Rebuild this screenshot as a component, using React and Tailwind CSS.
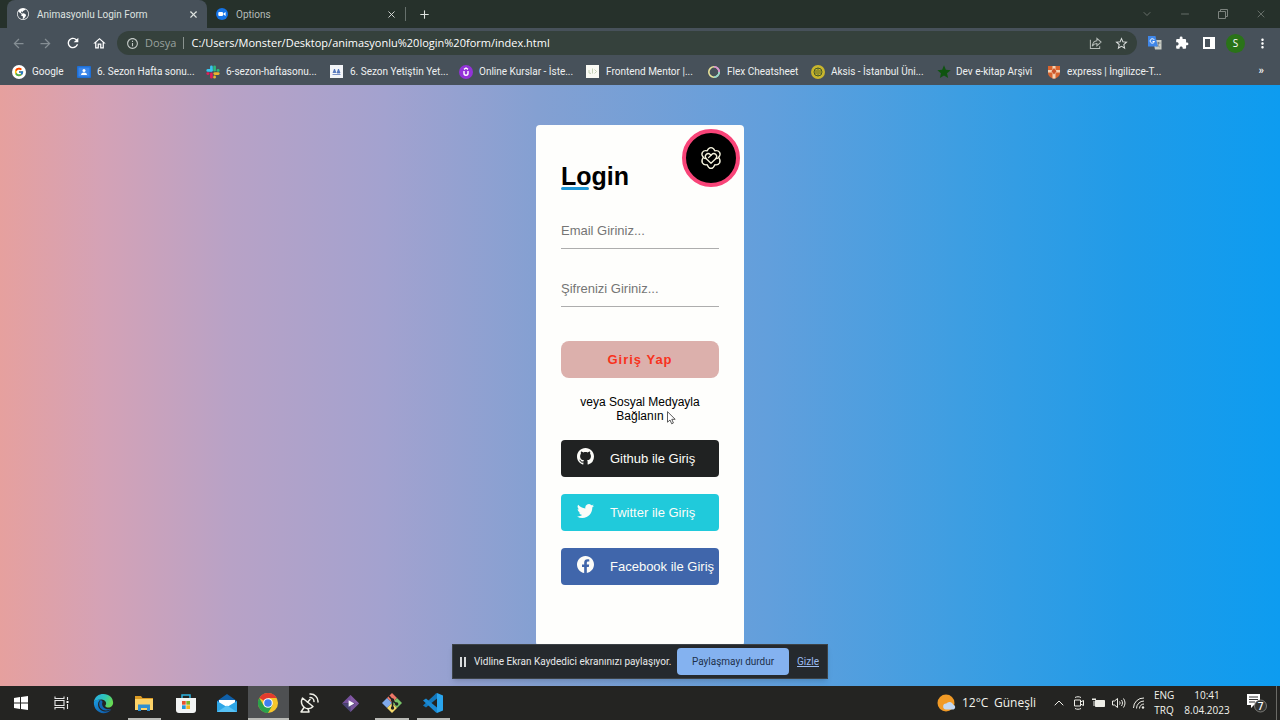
import React from "react";
import { BsGithub, BsTwitter, BsFacebook, BsGlobeAmericas } from "react-icons/bs";
import { FcGoogle } from "react-icons/fc";
import {
  MdArrowBack,
  MdArrowForward,
  MdRefresh,
  MdOutlineHome,
  MdOutlineInfo,
  MdStarOutline,
  MdExtension,
  MdMoreVert,
  MdStar,
} from "react-icons/md";
import { X, Plus, ChevronDown, ChevronUp, Minus } from "lucide-react";

const UI = "font-['Open_Sans','Noto_Sans',sans-serif]";
const UI_COMPACT = "font-[Roboto,'Open_Sans',sans-serif]";
const ARIAL = "font-['Liberation_Sans',Arial,sans-serif]";

/* ---------- bookmark icons ---------- */

const GoogleMark = () => (
  <svg viewBox="0 0 14 14" className="size-3.5">
    <circle cx="7" cy="7" r="7" fill="#fff" />
    <FcGoogle x="2" y="2" size={10} />
  </svg>
);

const ClassroomMark = () => (
  <svg viewBox="0 0 14 14" className="size-3.5">
    <rect y="1" width="14" height="12" rx="1" fill="#1d6fd6" />
    <rect x="1.5" y="2.5" width="11" height="9" fill="#3b86ea" />
    <circle cx="7" cy="5.6" r="1.5" fill="#fff" />
    <path d="M4 10c0-1.700 1.500-2.500 3-2.500s3 .8 3 2.500z" fill="#fff" />
  </svg>
);

const SlackMark = () => (
  <svg viewBox="0 0 24 24" className="size-3.5">
    <g strokeWidth="4.600" strokeLinecap="round">
      <path d="M9.300 3v6" stroke="#36c5f0" />
      <path d="M3 9.300h6" stroke="#36c5f0" />
      <path d="M14.700 3v6" stroke="#2eb67d" />
      <path d="M21 9.300h-.6" stroke="#2eb67d" />
      <path d="M15 14.700h6" stroke="#ecb22e" />
      <path d="M14.700 21v-.6" stroke="#ecb22e" />
      <path d="M9.300 15v6" stroke="#e01e5a" />
      <path d="M3 14.700h.6" stroke="#e01e5a" />
    </g>
  </svg>
);

const PaperMark = () => (
  <svg viewBox="0 0 13 13" className="size-[13px]">
    <rect width="13" height="13" fill="#f3f5f8" />
    <path d="M3 8l1.500-4 1.500 4M7 8l1.500-4L10 8z" fill="#5d7fc4" stroke="#4267b2" strokeWidth=".7" />
    <path d="M2.500 9.500h8" stroke="#7b93c8" />
  </svg>
);

const CourseMark = () => (
  <svg viewBox="0 0 14 14" className="size-3.5">
    <circle cx="7" cy="7" r="7" fill="#9333d8" />
    <path d="M5 6v2.200a2 2 0 0 0 4 0V6M5 4.300L7 3l2 1.300" fill="none" stroke="#fff" strokeWidth="1.400" />
  </svg>
);

const MentorMark = () => (
  <svg viewBox="0 0 13 13" className="size-[13px]">
    <rect width="13" height="13" fill="#fafaf4" />
    <path d="M3 5v3l2 .5M6.500 3.500v5M8.500 4.500l2 2-2 2" fill="none" stroke="#b9c8a6" strokeWidth=".8" />
  </svg>
);

const RingMark = () => (
  <svg viewBox="0 0 14 14" className="size-3.5" fill="none" strokeWidth="1.600">
    <circle cx="7" cy="7" r="5.200" stroke="#e8e39a" />
    <path d="M7 1.800A5.200 5.200 0 0 1 12.200 7" stroke="#d98ad8" />
    <path d="M12.200 7A5.200 5.200 0 0 1 7 12.200" stroke="#8fd6d0" />
  </svg>
);

const AksisMark = () => (
  <svg viewBox="0 0 14 14" className="size-3.5" fill="none">
    <circle cx="7" cy="7" r="7" fill="#c9b62c" />
    <circle cx="7" cy="7" r="4" stroke="#44592a" />
    <path d="M7 3v8M5 5v4M9 5v4" stroke="#44592a" strokeWidth=".8" />
  </svg>
);

const ShieldMark = () => (
  <svg viewBox="0 0 14 14" className="size-3.5">
    <path d="M1 1h12v7c0 3-3 5-6 6-3-1-6-3-6-6z" fill="#d9642e" />
    <path d="M5.500 1h3v12.500h-3zM1 5h12v2.500H1z" fill="#f3d3b4" />
    <path d="M7 3l2.500 3.300L7 9.500 4.500 6.300z" fill="#c9542a" />
  </svg>
);

const BOOKMARKS = [
  { icon: <GoogleMark />, label: "Google", width: "w-[65px]" },
  { icon: <ClassroomMark />, label: "6. Sezon Hafta sonu...", width: "w-[129px]" },
  { icon: <SlackMark />, label: "6-sezon-haftasonu...", width: "w-[124px]" },
  { icon: <PaperMark />, label: "6. Sezon Yetiştin Yet...", width: "w-[129px]" },
  { icon: <CourseMark />, label: "Online Kurslar - İste...", width: "w-[127px]" },
  { icon: <MentorMark />, label: "Frontend Mentor |...", width: "w-[121px]" },
  { icon: <RingMark />, label: "Flex Cheatsheet", width: "w-[104px]" },
  { icon: <AksisMark />, label: "Aksis - İstanbul Üni...", width: "w-[125px]" },
  { icon: <MdStar size={16} className="text-[#0f5410]" />, label: "Dev e-kitap Arşivi", width: "w-[111px]" },
  { icon: <ShieldMark />, label: "express | İngilizce-T...", width: "w-[125px]" },
];

/* ---------- browser chrome ---------- */

function TabStrip() {
  return (
    <div className={`flex h-7 items-stretch bg-[#26312b] pl-[7px] text-[#dfe3e0] ${UI_COMPACT}`}>
      <div className="flex w-[200px] items-center rounded-t-lg bg-[#47515a] pl-[10px] pr-2">
        <BsGlobeAmericas size={12} className="text-white" />
        <span className="ml-2 flex-1 whitespace-nowrap">Animasyonlu Login Form</span>
        <button aria-label="Sekmeyi kapat"><X size={11} strokeWidth={2.5} /></button>
      </div>
      <div className="flex w-[198px] items-center pl-[9px] pr-2">
        <svg viewBox="0 0 12 12" className="size-3">
          <circle cx="6" cy="6" r="6" fill="#1473e6" />
          <rect x="2.300" y="4" width="4.700" height="4" rx="1" fill="#fff" />
          <path d="M7.400 5.500l2.200-1.400v3.800L7.400 6.500z" fill="#fff" />
        </svg>
        <span className="ml-2 flex-1 text-[#b5bcb8]">Options</span>
        <button aria-label="Sekmeyi kapat"><X size={11} strokeWidth={2} /></button>
      </div>
      <div className="my-[7px] w-px bg-[#66706c]" />
      <button aria-label="Yeni sekme" className="ml-3"><Plus size={13} strokeWidth={2} /></button>
      <div className="ml-auto flex items-center text-[#7c837e]">
        <button aria-label="Sekme ara" className="flex w-[38px] justify-center"><ChevronDown size={12} strokeWidth={1.5} /></button>
        <button aria-label="Küçült" className="flex w-[38px] justify-center"><Minus size={12} strokeWidth={1.5} /></button>
        <button aria-label="Geri yükle" className="flex w-[38px] justify-center">
          <svg viewBox="0 0 10 10" className="size-2.5" fill="none" stroke="currentColor">
            <path d="M.5 2.500h7v7h-7zM2.500 2.500v-2h7v7h-2" />
          </svg>
        </button>
        <button aria-label="Kapat" className="flex w-[38px] justify-center"><X size={12} strokeWidth={1.5} /></button>
      </div>
    </div>
  );
}

function NavButton({ label, children }) {
  return (
    <button aria-label={label} className="flex w-[27px] shrink-0 items-center justify-center">
      {children}
    </button>
  );
}

function Toolbar() {
  return (
    <div className="flex h-[30px] items-center bg-[#47515a] pl-[5px] pr-1 text-white">
      <NavButton label="Geri"><MdArrowBack size={15} className="text-[#858e94]" /></NavButton>
      <NavButton label="İleri"><MdArrowForward size={15} className="text-[#858e94]" /></NavButton>
      <NavButton label="Yenile"><MdRefresh size={16} /></NavButton>
      <NavButton label="Ana sayfa"><MdOutlineHome size={15} /></NavButton>
      <div className="mx-1 flex h-6 flex-1 items-center rounded-full bg-[#35413c] pl-[9px] pr-[3px]">
        <MdOutlineInfo size={13} className="text-[#c3c9c6]" />
        <span className="ml-[6px] text-[11px] text-[#9aa29e]">Dosya</span>
        <div className="mx-[7px] h-3 w-px bg-[#8a938f]" />
        <input
          aria-label="Adres"
          readOnly
          value="C:/Users/Monster/Desktop/animasyonlu%20login%20form/index.html"
          className="min-w-0 flex-1 bg-transparent text-[11px] text-white outline-none"
        />
        <button aria-label="Paylaş" className="flex w-[26px] justify-center text-[#b4bbb7]">
          <svg viewBox="0 0 14 14" className="size-[13px]" fill="none" stroke="currentColor" strokeWidth="1.100">
            <path d="M1.500 3v9.500h10V10" />
            <path d="M8.500 1.500L13 5.500l-4.500 4V7C6 7 4.700 8 3.500 9.800 4 6.500 5.500 4.200 8.500 4z" />
          </svg>
        </button>
        <button aria-label="Yer işareti ekle" className="flex w-[26px] justify-center text-[#dde1df]">
          <MdStarOutline size={15} />
        </button>
      </div>
      <NavButton label="Çeviri">
        <svg viewBox="0 0 14 14" className="size-3.5">
          <path d="M5 4h8.500v9.500H7z" fill="#c9ccc4" />
          <path d="M8.500 7h4M10.500 6v1c0 2-1 3-2 4m.5-2.500c1 1.500 1.800 2 2.700 2.500" stroke="#6b737a" fill="none" strokeWidth=".8" />
          <path d="M0 0h7.500l2.300 10.500H0z" fill="#3f86e8" />
          <path d="M6.300 3.900A2.200 2.200 0 1 0 6.500 5.500H4.600" fill="none" stroke="#fff" />
        </svg>
      </NavButton>
      <NavButton label="Uzantılar"><MdExtension size={14} /></NavButton>
      <NavButton label="Yan panel">
        <svg viewBox="0 0 12 12" className="size-3">
          <path fillRule="evenodd" d="M0 0h12v12H0zM2 2v8h5V2z" fill="#fff" />
        </svg>
      </NavButton>
      <NavButton label="Profil">
        <span className="flex size-[19px] items-center justify-center rounded-full bg-[#2a7318] text-[10px]">S</span>
      </NavButton>
      <NavButton label="Menü"><MdMoreVert size={15} /></NavButton>
    </div>
  );
}

function BookmarkBar() {
  return (
    <nav className={`flex h-[27px] items-center bg-[#47515a] pl-3 pr-4 text-[#eef0f1] ${UI_COMPACT}`}>
      {BOOKMARKS.map((b) => (
        <a key={b.label} href="#" className={`flex shrink-0 items-center whitespace-nowrap ${b.width}`}>
          <span className="flex w-5 shrink-0 items-center">{b.icon}</span>
          {b.label}
        </a>
      ))}
      <button aria-label="Diğer yer işaretleri" className="ml-auto text-[11px] font-bold">»</button>
    </nav>
  );
}

/* ---------- login page ---------- */

const Rosette = () => (
  <svg viewBox="0 0 24 24" className="size-6" fill="none" stroke="#f4f2dc" strokeWidth="1.300" strokeLinejoin="round" strokeLinecap="round">
    <path d="M8.200 4.800C9 2.600 10.500 1.600 12 1.600s3 1 3.800 3.200c2.300-.4 4 .3 4.800 1.600s.6 3.200-.9 4.900c1.500 2.200 1.700 4.200.9 5.600s-2.500 2.200-4.800 1.800C15 21 13.500 22.400 12 22.400S9 21 8.200 18.700c-2.300.4-4-.4-4.800-1.800s-.6-3.400.9-5.600C2.800 9.600 2.600 7.700 3.400 6.400s2.500-2 4.800-1.600z" />
    <path d="M12 17.300l-4.700-4.600c-1.200-1.300-1.300-3-.2-4.200 1.200-1.200 3-1.100 4.200 0L12 9.200l.7-.7c1.200-1.200 3-1.200 4.200 0 1.100 1.200 1 2.900-.2 4.200z" />
    <path d="M12 9.200l-2.400 2.400M4.300 11.300c.8 1 1.800 1.400 3 1.400M19.700 11.300c-.8 1-1.800 1.400-3 1.400" />
  </svg>
);

const SOCIAL = [
  { label: "Github ile Giriş", Icon: BsGithub, bg: "bg-[#202222]" },
  { label: "Twitter ile Giriş", Icon: BsTwitter, bg: "bg-[#20cadb]" },
  { label: "Facebook ile Giriş", Icon: BsFacebook, bg: "bg-[#4066ab]" },
];

function Field({ id, type, placeholder }) {
  return (
    <div className="mb-[21px]">
      <input
        id={id}
        type={type}
        aria-label={placeholder}
        placeholder={placeholder}
        className="h-[37px] w-full border-b border-[#adadad] bg-transparent text-[13px] outline-none placeholder:text-[#757575]"
      />
    </div>
  );
}

function LoginCard() {
  return (
    <form onSubmit={(e) => e.preventDefault()} className={`relative w-[208px] rounded bg-[#fefefc] px-[25px] pt-[37px] text-black ${ARIAL}`}>
      <div className="absolute right-1 top-1 flex size-[58px] items-center justify-center rounded-full border-4 border-[#f84478] bg-black">
        <Rosette />
      </div>
      <h1 className="relative mb-[22px] text-[25px] font-bold leading-[28px]">
        Login
        <span className="absolute bottom-0 left-0 h-[3px] w-7 rounded-full bg-[#1f97d6]" />
      </h1>
      <Field id="email" type="email" placeholder="Email Giriniz..." />
      <Field id="sifre" type="password" placeholder="Şifrenizi Giriniz..." />
      <button type="submit" className="mt-[13px] h-[37px] w-full rounded-lg bg-[#dcb0ac] text-[13px] font-bold tracking-[1px] text-[#f8321c]">
        Giriş Yap
      </button>
      <p className="relative my-[17px] text-center text-[12px] leading-[14px]">
        veya Sosyal Medyayla Bağlanın
        <svg viewBox="0 0 9 14" className="absolute left-[106px] top-4 h-3.5 w-[9px]">
          <path d="M.5.700v10.500L3 9l1.700 3.800 1.700-.8L4.800 8.300h3.400z" fill="#fff" stroke="#333" strokeWidth=".8" />
        </svg>
      </p>
      <div className="flex flex-col gap-[17px]">
        {SOCIAL.map(({ label, Icon, bg }) => (
          <button key={label} type="button" className={`flex h-[37px] items-center whitespace-nowrap rounded pl-4 text-[13px] text-[#fcfcf8] ${bg}`}>
            <Icon size={17} className="mb-1 mr-4 shrink-0" />
            {label}
          </button>
        ))}
      </div>
    </form>
  );
}

function ShareNotice() {
  return (
    <div className={`absolute bottom-[7px] left-1/2 flex h-[35px] w-[376px] -translate-x-1/2 items-center border border-[#3c4247] bg-[#25292d] pl-[7px] pr-2 text-[#e6e8ea] shadow-md ${UI_COMPACT}`}>
      <span className="flex gap-[2px]">
        <span className="h-2.5 w-[2px] bg-[#d8dadc]" />
        <span className="h-2.5 w-[2px] bg-[#d8dadc]" />
      </span>
      <span className="ml-2 flex-1 whitespace-nowrap">Vidline Ekran Kaydedici ekranınızı paylaşıyor.</span>
      <button className="h-[27px] w-28 shrink-0 whitespace-nowrap rounded bg-[#84b2f0] text-[#20304a]">Paylaşmayı durdur</button>
      <a href="#" className="ml-2 text-[#9cbcf0] underline">Gizle</a>
    </div>
  );
}

/* ---------- taskbar icons ---------- */

const StartIcon = () => (
  <svg viewBox="0 0 14 14" className="size-3.5" fill="#fff">
    <path d="M0 2l6-.9v5.500H0zM7 1l7-1v6.600H7zM0 7.500h6V13l-6-.9zM7 7.500h7V14l-7-1z" />
  </svg>
);

const TaskViewIcon = () => (
  <svg viewBox="0 0 15 14" className="h-3.5 w-[15px]" fill="none" stroke="#e8e8e8" strokeWidth="1.100">
    <path d="M1 .5v2h9v-2M1 13.500v-2h9v2M1 4.500h9v5H1zM13.500 1v3M13.500 8v5" />
    <path d="M12.500 5h2v2h-2z" fill="#fff" stroke="none" />
  </svg>
);

const EdgeIcon = () => (
  <svg viewBox="0 0 24 24" className="size-[21px]">
    <defs>
      <linearGradient id="edgeTop" x1="0" x2="1" y1="0" y2=".4">
        <stop offset="0" stopColor="#28a8ea" />
        <stop offset=".6" stopColor="#2fc7b4" />
        <stop offset="1" stopColor="#66d855" />
      </linearGradient>
      <linearGradient id="edgeLow" x1="0" x2="1" y1="0" y2="1">
        <stop offset="0" stopColor="#1b9de2" />
        <stop offset="1" stopColor="#0c4fa0" />
      </linearGradient>
    </defs>
    <path d="M1 10C2 4 6.500 1 12 1c6.500 0 11 4.500 11 10 0 3.500-2.500 5.500-5.500 5.500-2 0-3.500-.7-3.500-1.700 0-.7 1-1.200 1-3C15 9 12 7.500 9 7.500c-4 0-7 1.500-8 2.500z" fill="url(#edgeTop)" />
    <path d="M1 10c1-1.500 4-3 8-2.500-2 1-3.200 3.200-3.200 5.500 0 4.500 3.400 7.500 7.700 8 2.500.2 5-.6 7.500-2.500-2 3-5.300 4.500-9 4.500C6 23 .5 18 1 10z" fill="url(#edgeLow)" />
    <path d="M9 7.700c-1.400 1.600-2 3.200-2 5 0 4.500 3.500 7.600 8 7.300 2.500-.1 4.600-.8 6-2-2 .8-4.500 1-6.500 0-3.500-1.500-5-5-3.500-8z" fill="#1266b4" />
  </svg>
);

const FolderIcon = () => (
  <svg viewBox="0 0 20 18" className="h-[18px] w-5">
    <path d="M1 2h6l1.500 2H19v5H1z" fill="#dc9b24" />
    <path d="M1 5h18v11H1z" fill="#fcd268" />
    <path d="M4 17v-6.500h12V17h-3v-3H7v3z" fill="#2f8fd0" />
  </svg>
);

const StoreIcon = () => (
  <svg viewBox="0 0 20 20" className="size-5">
    <path d="M6 5V2h8v3" fill="none" stroke="#2ab1df" strokeWidth="1.500" />
    <path d="M0 5h20v12a3 3 0 0 1-3 3H3a3 3 0 0 1-3-3z" fill="#f2f4f4" />
    <path d="M6 8h3.700v3.700H6z" fill="#e8512e" />
    <path d="M10.300 8H14v3.700h-3.700z" fill="#7db52b" />
    <path d="M6 12.300h3.700V16H6z" fill="#2498dc" />
    <path d="M10.300 12.300H14V16h-3.700z" fill="#f6b81f" />
  </svg>
);

const MailIcon = () => (
  <svg viewBox="0 0 20 18" className="h-[18px] w-5">
    <path d="M0 7l10-7 10 7v2H0z" fill="#0f5fa8" />
    <path d="M2 6h16v7H2z" fill="#fff" />
    <path d="M0 7l10 6 10-6v11H0z" fill="#2fa6e6" />
    <path d="M0 18l10-6.500L20 18z" fill="#57c2f5" />
  </svg>
);

const ChromeIcon = () => (
  <svg viewBox="0 0 24 24" className="size-5">
    <circle cx="12" cy="12" r="12" fill="#f7c52b" />
    <path d="M12 12L1.600 6A12 12 0 0 1 22.400 6L12 6z" fill="#e33b2e" />
    <path d="M1.600 6A12 12 0 0 0 12 24l5.200-9L12 12 6.800 15z" fill="#2ba24c" />
    <circle cx="12" cy="12" r="5.800" fill="#fff" />
    <circle cx="12" cy="12" r="4.500" fill="#3f7ff0" />
  </svg>
);

const DishIcon = () => (
  <svg viewBox="0 0 20 20" className="size-5" fill="none" stroke="#f0f0e8" strokeWidth="1.500" strokeLinecap="round" strokeLinejoin="round">
    <path d="M3.500 5C1.500 8.500 2.500 12.500 5.500 14.500s6.500 1.300 8.500-1z" />
    <path d="M8.500 9.200L11 6.500M5 14.500L2 19h8l-1-3.500" />
    <path d="M11 4.500a4 4 0 0 1 4 4M11 1a7.500 7.500 0 0 1 8 8" />
  </svg>
);

const PlayDiamondIcon = () => (
  <svg viewBox="0 0 20 20" className="size-[19px]">
    <path d="M10 1l9 9h-18z" fill="#75509b" />
    <path d="M1 10h18l-9 9z" fill="#4a4476" />
    <path d="M10 1l9 9-9 9V13l5-3-5-3z" fill="#8a5da8" opacity=".7" />
    <path d="M8 6.500l6 3.500-6 3.500z" fill="#fff" />
  </svg>
);

const GitIcon = () => (
  <svg viewBox="0 0 20 20" className="size-5">
    <path d="M10 0l5 5-5 5-5-5z" fill="#ef7767" />
    <path d="M5 5l5 5-5 5-5-5z" fill="#7fa9ea" />
    <path d="M15 5l5 5-5 5-5-5z" fill="#79c46a" />
    <path d="M10 10l5 5-5 5-5-5z" fill="#f4d86a" />
    <path d="M7 3l3.500 4v8M10.500 7.500l4 3.500" stroke="#222" strokeWidth="1.600" fill="none" />
    <circle cx="10.500" cy="7" r="1.700" fill="#222" />
    <circle cx="10.500" cy="15" r="1.700" fill="#222" />
    <circle cx="14.700" cy="11" r="1.700" fill="#222" />
  </svg>
);

const CodeIcon = () => (
  <svg viewBox="0 0 20 20" className="size-5">
    <path d="M14 0l6 2.500v15L14 20z" fill="#2aa5ee" />
    <path d="M14 0v5.500L3 14.500 0 12.500 13 .5z" fill="#1378bd" />
    <path d="M14 20v-5.500L3 5.500 0 7.500 13 19.500z" fill="#1b8ad4" />
  </svg>
);

const APPS = [
  { label: "Başlat", icon: <StartIcon /> },
  { label: "Görev görünümü", icon: <TaskViewIcon /> },
  { label: "Edge", icon: <EdgeIcon /> },
  { label: "Dosya Gezgini", icon: <FolderIcon />, open: true },
  { label: "Mağaza", icon: <StoreIcon /> },
  { label: "Posta", icon: <MailIcon /> },
  { label: "Chrome", icon: <ChromeIcon />, active: true },
  { label: "Uydu", icon: <DishIcon /> },
  { label: "Oynatıcı", icon: <PlayDiamondIcon /> },
  { label: "Git", icon: <GitIcon />, open: true },
  { label: "Kod", icon: <CodeIcon />, open: true },
];

function TrayIcons() {
  return (
    <div className="flex items-center text-[#eeeee8]">
      <span className="flex w-5 justify-center"><ChevronUp size={16} strokeWidth={1.5} /></span>
      <span className="flex w-5 justify-center">
        <svg viewBox="0 0 12 14" className="h-3.5 w-3" fill="none" stroke="currentColor">
          <path d="M1.500 4h6v6h-6zM7.500 6l3-1.500v5L7.500 8M2 1.500c2-1 4-1 6 0M2 12.500c2 1 4 1 6 0" />
        </svg>
      </span>
      <span className="flex w-5 justify-center">
        <svg viewBox="0 0 14 10" className="h-2.5 w-3.5" fill="none" stroke="currentColor">
          <path d="M3.500 2.500h9v6h-9z" fill="currentColor" />
          <path d="M0 1.500h4M1 0v1.500M3 0v1.500M2 3v5" />
        </svg>
      </span>
      <span className="flex w-5 justify-center">
        <svg viewBox="0 0 15 12" className="h-3 w-[15px]" fill="none" stroke="currentColor">
          <path d="M.5 4h2l3-2.500v9L2.500 8h-2zM7.500 4.500c.7 1 .7 2 0 3M9.500 3c1.300 2 1.300 4 0 6M11.500 1.500c2 3 2 6 0 9" />
        </svg>
      </span>
      <span className="flex w-5 justify-center">
        <svg viewBox="0 0 12 12" className="size-3" fill="none" stroke="currentColor">
          <path d="M.5 11A10 10 0 0 1 11 1M3.500 11.500A7.500 7.500 0 0 1 11 4M6.500 11.500A4.500 4.500 0 0 1 11 7" />
          <circle cx="10" cy="10.500" r="1.200" fill="currentColor" stroke="none" />
        </svg>
      </span>
    </div>
  );
}

function Taskbar() {
  return (
    <footer className="flex h-[34px] shrink-0 items-stretch bg-[#242422] text-[#f2f2ec]">
      <div className="flex w-[454px]">
        {APPS.map((app) => (
          <button
            key={app.label}
            aria-label={app.label}
            className={`relative flex flex-1 items-center justify-center ${app.active ? "bg-[#4e5052]" : ""}`}
          >
            {app.icon}
            {(app.open || app.active) && (
              <span className={`absolute bottom-0 h-[2px] bg-[#b9bab6] ${app.active ? "inset-x-0" : "inset-x-1"}`} />
            )}
          </button>
        ))}
      </div>
      <div className="ml-auto flex items-center">
        <svg viewBox="0 0 19 18" className="h-[18px] w-[19px]">
          <circle cx="9" cy="9" r="8.500" fill="#f19a26" />
          <path d="M9 15.500a3 3 0 0 1 .3-6 4 4 0 0 1 7 1.200 2.500 2.500 0 0 1 .2 4.800z" fill="#c4d8f2" />
        </svg>
        <span className="ml-[6px] w-8 whitespace-nowrap text-[12px]">12°C</span>
        <span className="w-[55px] text-[12px]">Güneşli</span>
        <TrayIcons />
        <div className="ml-[5px] w-5 text-center leading-[15px]">ENG<br />TRQ</div>
        <div className="ml-2 w-[50px] text-center leading-[15px]">10:41<br />8.04.2023</div>
        <button aria-label="Bildirimler" className="ml-[14px] mr-2">
          <svg viewBox="0 0 22 22" className="size-[22px]">
            <path d="M1 2h13v11H8l-3 3v-3H1z" fill="#fff" />
            <path d="M3 5h9M3 7.500h9M3 10h6" stroke="#333" />
            <circle cx="14.500" cy="14" r="6" fill="#333432" stroke="#8b8c88" strokeWidth=".8" />
            <text x="14.500" y="17.500" textAnchor="middle" fontSize="10" fontWeight="600" fill="#fff">7</text>
          </svg>
        </button>
        <div className="mr-[3px] h-full w-px bg-[#6a6a66]" />
      </div>
    </footer>
  );
}

export default function App() {
  return (
    <div className={`flex h-screen min-w-[1180px] flex-col overflow-hidden text-[10px] ${UI}`}>
      <header className="shrink-0">
        <TabStrip />
        <Toolbar />
        <BookmarkBar />
      </header>
      <main className="relative flex min-h-0 flex-1 justify-center bg-[linear-gradient(to_right,#e6a09e_0%,#d4a2b6_8%,#b8a2c6_18%,#a3a2cf_30%,#84a0d2_42%,#629fdc_60%,#3d9ee2_75%,#209be8_88%,#0d9cf0_100%)] py-10">
        <LoginCard />
        <ShareNotice />
      </main>
      <Taskbar />
    </div>
  );
}
